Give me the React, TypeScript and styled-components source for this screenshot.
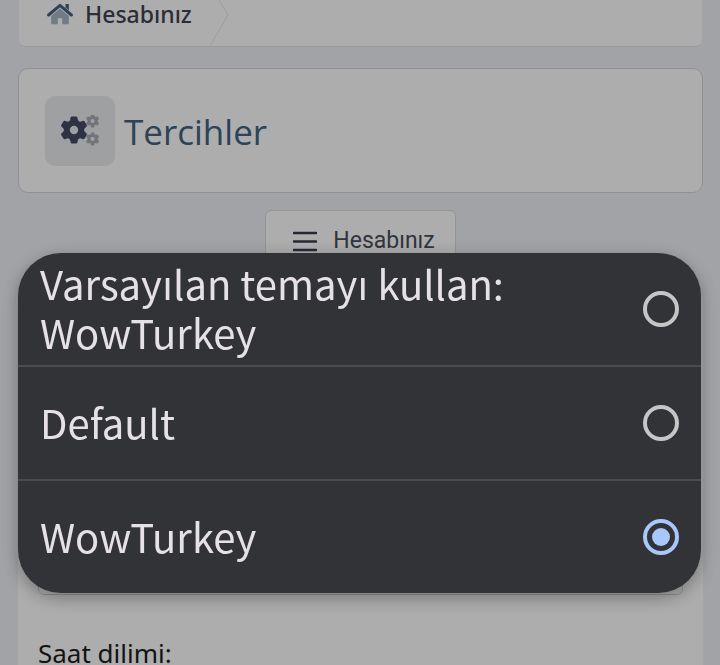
import React, { useState } from "react";
import styled, { createGlobalStyle } from "styled-components";

const GlobalStyle = createGlobalStyle`
  * { box-sizing: border-box; }
  body {
    margin: 0;
    background: #eff1f5;
    font-family: "Noto Sans", "Open Sans", sans-serif;
    color: #44465a;
  }
`;

const Page = styled.main`
  display: flex;
  flex-direction: column;
  height: 100vh;
  overflow: hidden;
  padding: 0 17px 0 18px;
`;

const Breadcrumb = styled.nav`
  display: flex;
  flex: none;
  height: 47px;
  margin: 0 1px 21px;
  background: #fff;
  border-bottom: 1px solid #e4e4e6;
  border-radius: 0 0 6px 6px;
`;

const Crumb = styled.a`
  display: flex;
  align-items: center;
  gap: 12px;
  height: 28px;
  padding-left: 28px;
  color: #42434f;
  font-size: 23px;
  font-weight: 500;
  line-height: 28px;
  text-decoration: none;
`;

const CrumbArrow = styled.svg`
  flex: none;
  margin-left: 17px;
`;

const HeaderCard = styled.header`
  display: flex;
  flex: none;
  align-items: center;
  gap: 9px;
  padding: 27px 26px 26px;
  background: #fff;
  border: 1px solid #d5d5d7;
  border-radius: 10px;
`;

const IconTile = styled.div`
  display: flex;
  align-items: center;
  justify-content: center;
  width: 70px;
  height: 70px;
  background: #eaecee;
  border-radius: 10px;
`;

const Title = styled.h1`
  margin: 0;
  padding-top: 2px;
  color: #416382;
  font-family: "Open Sans", sans-serif;
  font-size: 35px;
  font-weight: 400;
  line-height: 50px;
`;

const MenuButton = styled.button`
  display: flex;
  flex: none;
  align-items: center;
  align-self: center;
  gap: 16px;
  height: 61px;
  margin: 17px 0 20px;
  padding: 0 20px 0 27px;
  background: #fff;
  border: 1px solid #d9dadc;
  border-radius: 6px;
  color: #4a4c58;
  font: 400 23px/28px Roboto, sans-serif;
`;

const Panel = styled.section`
  display: flex;
  flex: 1 0 auto;
  flex-direction: column;
  gap: 44px;
  padding: 247px 20px 0;
  background: #fff;
  border-radius: 10px 10px 0 0;
`;

const ThemeSelect = styled.select`
  width: 100%;
  height: 57px;
  background: #fff;
  border: 1px solid #d5d5d7;
  border-radius: 6px;
`;

const FieldHeading = styled.div`
  color: #1c1c1c;
  font-size: 26px;
  line-height: 28px;
`;

const Backdrop = styled.div`
  position: fixed;
  inset: 0;
  padding: 253px 19px 0 18px;
  background: rgba(0, 0, 0, 0.32);
`;

const Picker = styled.div`
  overflow: hidden;
  background: #323337;
  border-radius: 43px;
  box-shadow: 0 5px 18px rgba(0, 0, 0, 0.32);
`;

const Option = styled.label`
  display: flex;
  align-items: center;
  justify-content: space-between;
  gap: 24px;
  height: 112px;
  padding: 0 22px;
  color: #e6e1e6;
  font: 400 40px/49px "Noto Sans CJK SC", sans-serif;

  & + & {
    height: 114px;
    border-top: 2px solid #4b4c4e;
  }
`;

const OptionText = styled.span`
  max-width: 520px;
  padding-bottom: 2px;
`;

const Radio = styled.input`
  appearance: none;
  display: grid;
  flex: none;
  place-items: center;
  width: 36px;
  height: 36px;
  margin: 0;
  border: 4px solid #c4c7c5;
  border-radius: 50%;

  &:checked {
    border-color: #a8c7fa;
  }

  &:checked::before {
    content: "";
    width: 18px;
    height: 18px;
    border-radius: 50%;
    background: #a8c7fa;
  }
`;

const HomeIcon = () => (
  <svg width="26" height="22" viewBox="0 0 26 22" aria-hidden="true">
    <path d="M13 5.5 4.2 13v7.2c0 .6.4 1 1 1h5.6v-6h4.4v6h5.6c.6 0 1-.4 1-1V13Z" fill="#a5b5c6" />
    <path d="M18.5 1h3.3v6.2l-3.3-2.6Z" fill="#416382" />
    <path
      d="M1.6 12 13 2.4 24.4 12"
      fill="none"
      stroke="#416382"
      strokeWidth="3"
      strokeLinecap="round"
      strokeLinejoin="round"
    />
  </svg>
);

interface GearProps {
  x: number;
  y: number;
  r: number;
  fill: string;
}

const Gear = ({ x, y, r, fill }: GearProps) => (
  <g transform={`translate(${x} ${y}) scale(${r / 10})`} fill={fill}>
    <path
      fillRule="evenodd"
      d="M0-7.6A7.6 7.6 0 1 1 0 7.6 7.6 7.6 0 1 1 0-7.6ZM0-3.1A3.1 3.1 0 1 0 0 3.1 3.1 3.1 0 1 0 0-3.1Z"
    />
    {[0, 60, 120, 180, 240, 300].map((angle) => (
      <path
        key={angle}
        transform={`rotate(${angle})`}
        d="M-3.2-6.4-2.4-9.4Q-2.2-10-1.6-10H1.6Q2.2-10 2.4-9.4L3.2-6.4Z"
      />
    ))}
  </g>
);

const GearsIcon = () => (
  <svg width="40" height="32" viewBox="0 0 40 32" aria-hidden="true">
    <Gear x={14} y={15} r={13.5} fill="#464966" />
    <Gear x={32.6} y={6} r={6.6} fill="#aaacb6" />
    <Gear x={32.6} y={24} r={6.6} fill="#aaacb6" />
  </svg>
);

const MenuIcon = () => (
  <svg width="24" height="22" viewBox="0 0 24 22" aria-hidden="true">
    <path d="M1 3h22M1 11.5h22M1 20h22" stroke="#3b3c4e" strokeWidth="2.6" strokeLinecap="round" />
  </svg>
);

const themes = [
  { id: "auto", label: "Varsayılan temayı kullan: WowTurkey" },
  { id: "default", label: "Default" },
  { id: "wowturkey", label: "WowTurkey" },
];

export default function App() {
  const [selected, setSelected] = useState("wowturkey");

  return (
    <>
      <GlobalStyle />
      <Page>
        <Breadcrumb>
          <Crumb href="#">
            <HomeIcon />
            Hesabınız
          </Crumb>
          <CrumbArrow width="20" height="46" viewBox="0 0 20 46" aria-hidden="true">
            <path d="M10 0 19 15 1 46" fill="none" stroke="#e8e8e9" />
          </CrumbArrow>
        </Breadcrumb>
        <HeaderCard>
          <IconTile>
            <GearsIcon />
          </IconTile>
          <Title>Tercihler</Title>
        </HeaderCard>
        <MenuButton type="button">
          <MenuIcon />
          Hesabınız
        </MenuButton>
        <Panel>
          <ThemeSelect aria-label="Tema" />
          <FieldHeading>Saat dilimi:</FieldHeading>
        </Panel>
      </Page>
      <Backdrop>
        <Picker role="radiogroup">
          {themes.map((theme) => (
            <Option key={theme.id}>
              <OptionText>{theme.label}</OptionText>
              <Radio
                type="radio"
                name="theme"
                value={theme.id}
                checked={selected === theme.id}
                onChange={() => setSelected(theme.id)}
              />
            </Option>
          ))}
        </Picker>
      </Backdrop>
    </>
  );
}
